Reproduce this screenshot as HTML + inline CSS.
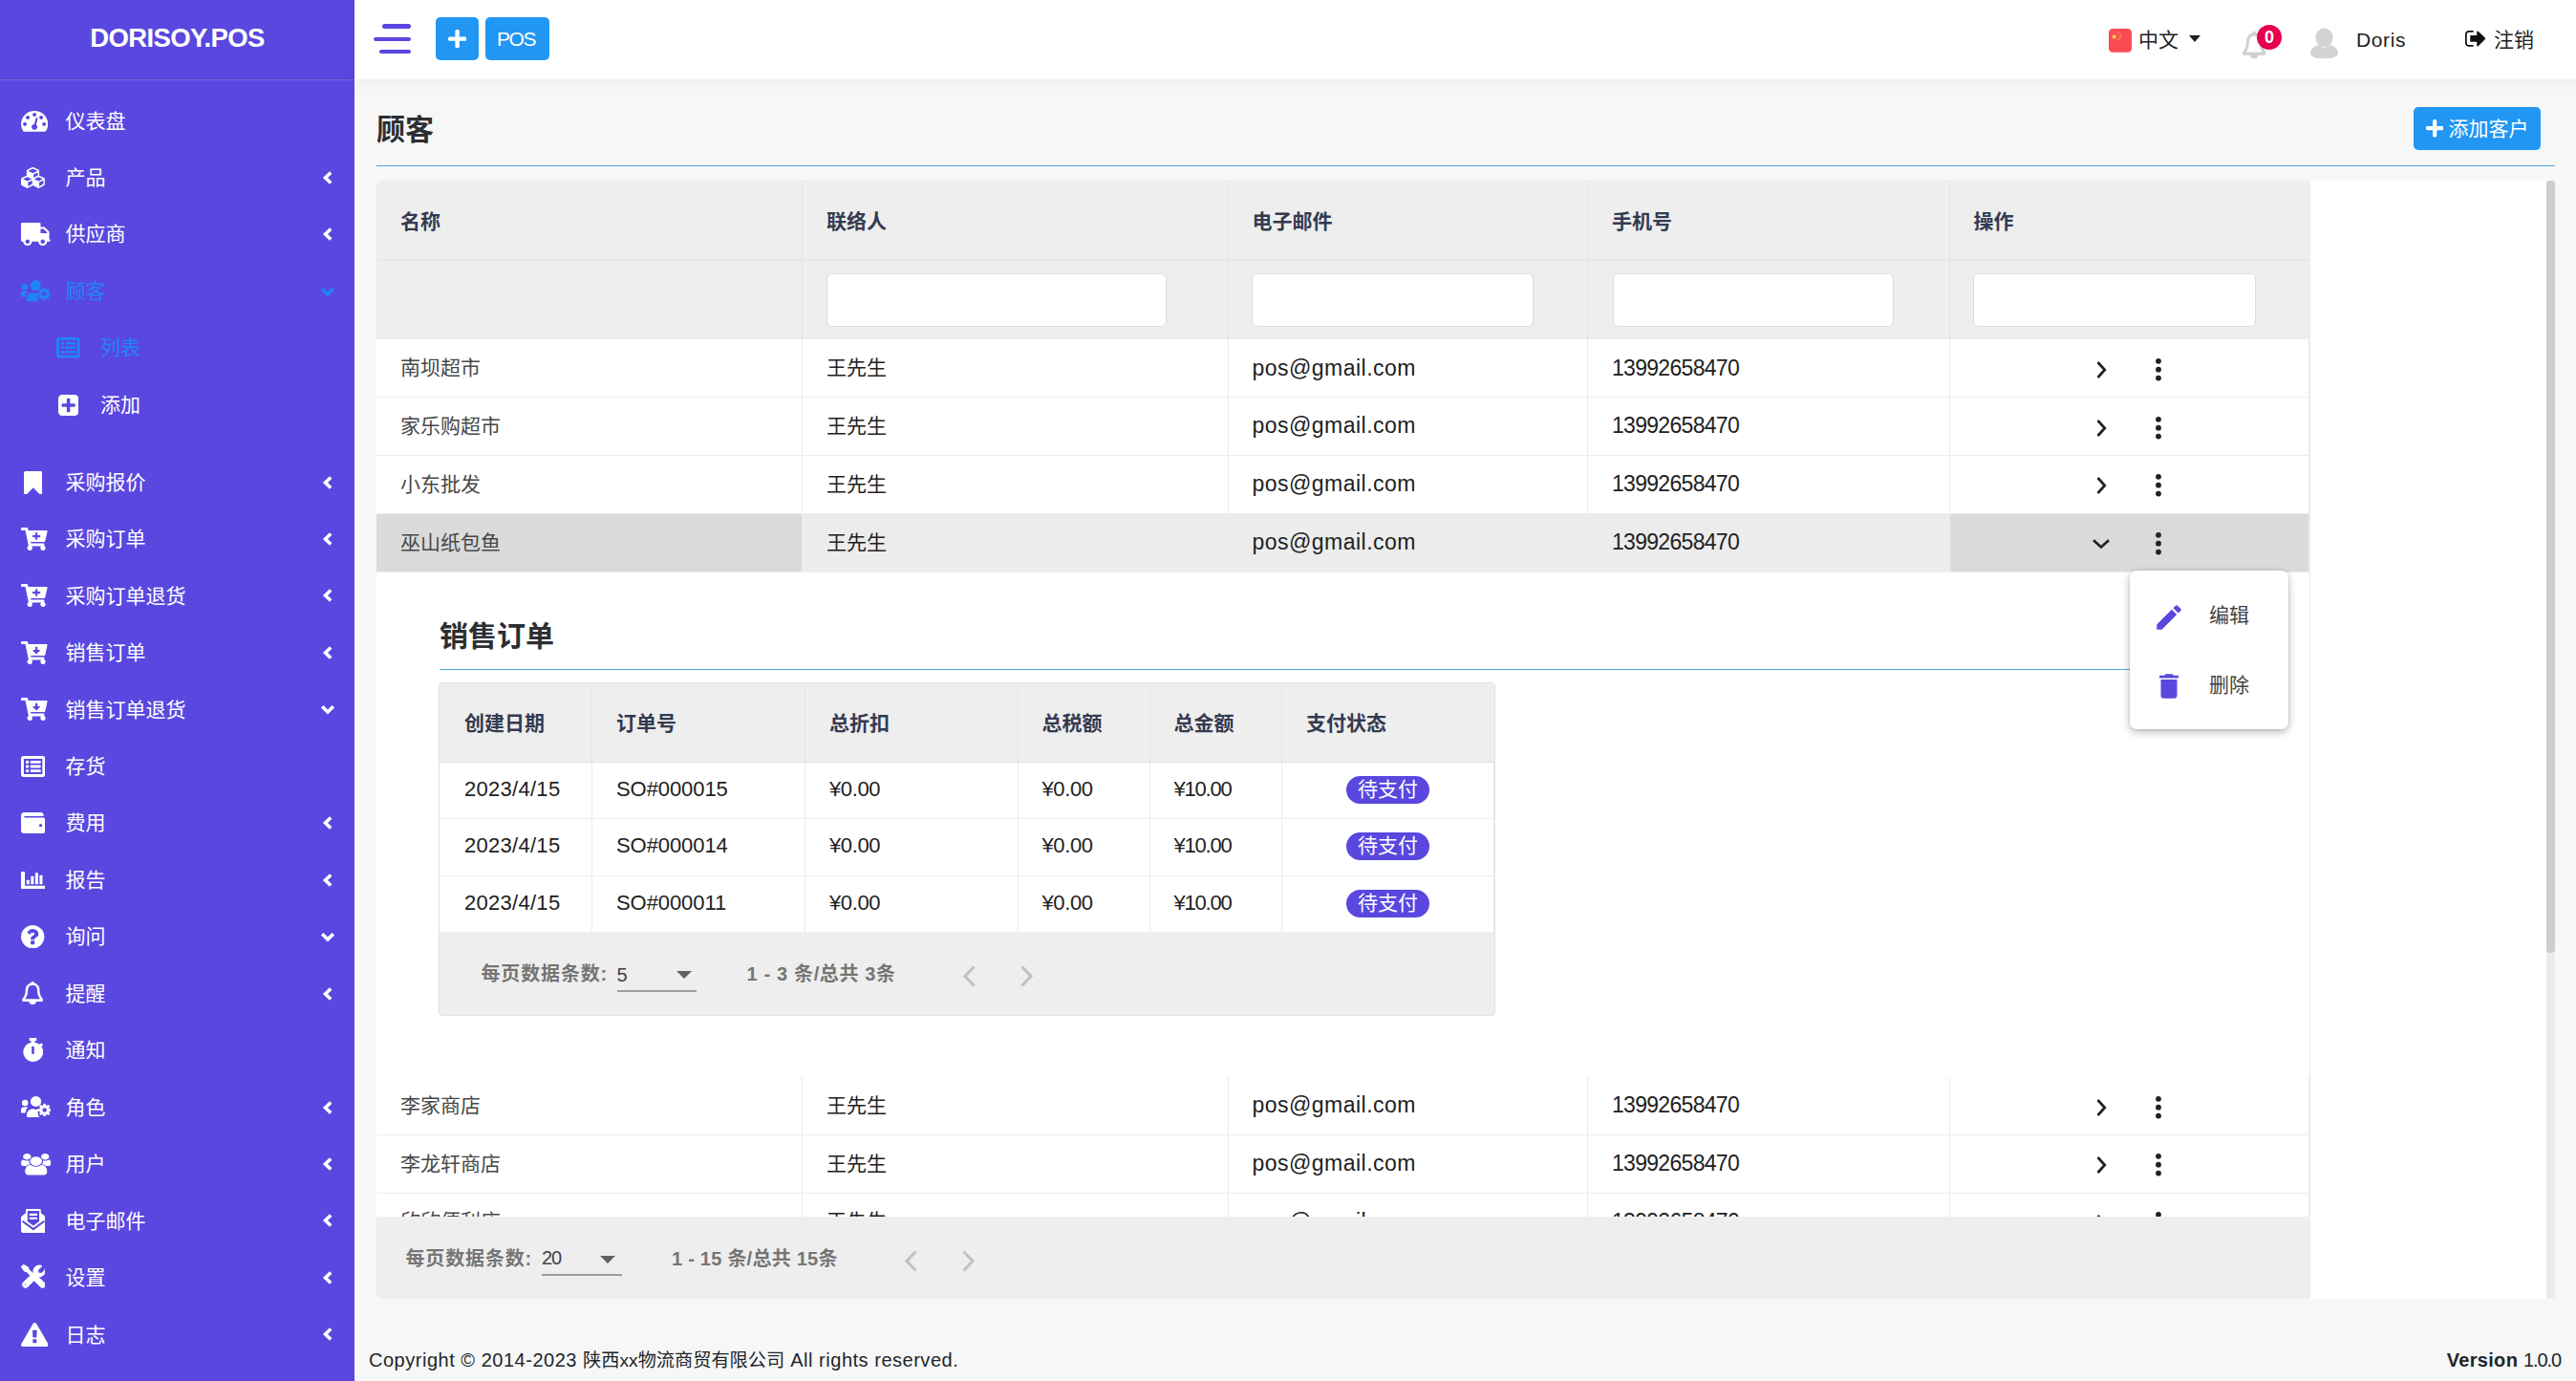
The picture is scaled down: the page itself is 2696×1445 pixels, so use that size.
<!DOCTYPE html>
<html lang="zh-CN"><head><meta charset="utf-8"><title>顾客 - DORISOY.POS</title>
<style>
:root{--bg:#5a47e0}
*{box-sizing:border-box}
html,body{margin:0;padding:0}
body{width:2696px;height:1445px;overflow:hidden;position:relative;background:#f7f7f7;
 font-family:"Liberation Sans","Noto Sans CJK SC",sans-serif;color:#212529;font-size:21px}
.abs{position:absolute}
svg.ic{display:block}
/* sidebar */
#side{position:absolute;left:0;top:0;width:371px;height:1445px;background:var(--bg);color:#fff}
#brand{position:absolute;left:0;top:0;width:371px;height:83.500px;border-bottom:1px solid rgba(255,255,255,.16);
 text-align:center;line-height:79.500px;font-weight:700;font-size:27.500px;letter-spacing:-.64px;box-shadow:inset 0 -1px 0 rgba(0,0,0,.14)}
.mi{position:absolute;left:0;width:371px;height:60px}
.mic{position:absolute;top:0;height:60px;display:flex;align-items:center}
.mt{position:absolute;top:.8px;height:60px;line-height:58px;font-size:21px;white-space:nowrap}
.chev{position:absolute;left:336px;top:0;height:60px;display:flex;align-items:center}
/* header */
#top{position:absolute;left:371px;top:0;width:2325px;height:82.700px;background:#fff;box-shadow:0 3px 14px rgba(0,0,0,.055)}
#burger{position:absolute;left:20px;top:25px;width:38.500px;height:34px}
#burger i{position:absolute;right:0;height:4.700px;border-radius:3px;background:#5a47e0}
.btnb{position:absolute;top:18px;height:45px;background:#2196f3;border-radius:5px;color:#fff;display:flex;align-items:center;justify-content:center}
/* content */
#title{position:absolute;left:394px;top:112.800px;font-size:30px;font-weight:700;line-height:46px;color:#2b2f33}
#addbtn{position:absolute;left:2526px;top:112px;width:133px;height:45px;background:#2196f3;border-radius:5px;color:#fff;
 font-size:21px;white-space:nowrap}
#addbtn span{position:absolute;left:36.600px;top:7.500px;line-height:30px}
.hr{position:absolute;height:1px;background:#48a3d6}
#card{position:absolute;left:394px;top:189px;width:2280px;height:1170px;background:#fff;overflow:hidden;border-radius:5px}
#tbl{position:absolute;left:0;top:0;width:2024px;height:1170px;border-right:1px solid #ececec}
.thead,.ithead{position:absolute;left:0;width:100%;background:#eeeeee;border-bottom:1px solid #e2e2e2}
.th{position:absolute;top:0;height:100%;border-right:1px solid #e4e4e4;display:flex;align-items:center;padding-left:25px;
 font-weight:700;color:#343a50;font-size:21px}
.th:last-child{border-right:none}
.finp{position:absolute;top:13px;height:56px;background:#fff;border:1px solid #dcdcdc;border-radius:6px}
.row{position:absolute;left:0;width:100%;border-bottom:1px solid #ededed}
.cell{position:absolute;top:0;height:100%;border-right:1px solid #ebebeb;display:flex;align-items:center;padding-left:25px;
 color:#212121;font-size:21px;white-space:nowrap}
.cell.c0{color:#474747}
.cell.lat{color:#212121}
.cell span{position:relative;top:-2px}
.cell.lat span{top:-1px}
.cell.lat.big span{top:0}
#itbl .th,#itbl .cell{padding-left:25px}
#itbl .th:first-child,#itbl .cell:first-child{padding-left:26px}
#itbl .th span{position:relative;top:-1px}
#exp{position:absolute;left:0;top:409.500px;width:2023px;height:528px;background:#fff}
#ititle{position:absolute;left:66px;top:44px;font-size:30px;font-weight:700;line-height:46px;color:#2b2f33}
#itbl{position:absolute;left:65px;top:115.500px;width:1106px;height:349px;background:#eee;border:1px solid #e2e2e2;border-radius:4px;overflow:hidden}
.badge{position:absolute;width:87px;height:29px;border-radius:15px;background:#5a47e0;color:#fff;font-size:21px;line-height:27px;text-align:center}
.pagbar{position:absolute;left:0;background:#eeeeee;color:#757575;font-weight:700;font-size:20px}
.plabel,.pinfo{position:absolute;line-height:32px;white-space:nowrap}
.plabel{letter-spacing:.85px}
.psel{position:absolute;height:32px;border-bottom:2px solid #9e9e9e;font-weight:400;color:#424242;font-size:20px;padding-left:0}
.pcaret{position:absolute;width:0;height:0;border-left:8px solid transparent;border-right:8px solid transparent;border-top:8px solid #616161}
#menu{position:absolute;left:2229px;top:597px;width:166px;height:166px;background:#fff;border-radius:7px;
 box-shadow:0 3px 8px rgba(0,0,0,.28),0 0 3px rgba(0,0,0,.12)}
#menu span{position:absolute;left:83px;font-size:21px;color:#424242;line-height:30px;margin-top:1.300px}
#vthumb{position:absolute;left:2665px;top:189px;width:9px;height:807.500px;background:#cdcdcd;border-radius:4px}
#vtrack{position:absolute;left:2665px;top:189px;width:9px;height:1170px;background:#ebebeb}
#foot{position:absolute;left:386px;top:1406px;font-size:20px;line-height:34px;color:#212529;white-space:nowrap;letter-spacing:.52px}
#foot i{font-style:normal;font-size:19.200px;letter-spacing:0}
#ver{position:absolute;right:16px;top:1406px;font-size:20px;line-height:34px;color:#212529;white-space:nowrap;letter-spacing:.3px}

</style></head>
<body>
<div id="side">
<div id="brand">DORISOY.POS</div>
<div class="mi" style="top:96.8px;color:#fff"><svg class="abs" viewBox="0 256 1792 1408" preserveAspectRatio="none" style="left:21.9px;top:19.4px;width:28.2px;height:21.8px" fill="currentColor"><path transform="translate(0,1536) scale(1,-1)" d="M384 384q0 53 -37.5 90.5t-90.5 37.5t-90.5 -37.5t-37.5 -90.5t37.5 -90.5t90.5 -37.5t90.5 37.5t37.5 90.5zM576 832q0 53 -37.5 90.5t-90.5 37.5t-90.5 -37.5t-37.5 -90.5t37.5 -90.5t90.5 -37.5t90.5 37.5t37.5 90.5zM1004 351l101 382q6 26 -7.5 48.5t-38.5 29.5 t-48 -6.5t-30 -39.5l-101 -382q-60 -5 -107 -43.5t-63 -98.5q-20 -77 20 -146t117 -89t146 20t89 117q16 60 -6 117t-72 91zM1664 384q0 53 -37.5 90.5t-90.5 37.5t-90.5 -37.5t-37.5 -90.5t37.5 -90.5t90.5 -37.5t90.5 37.5t37.5 90.5zM1024 1024q0 53 -37.5 90.5 t-90.5 37.5t-90.5 -37.5t-37.5 -90.5t37.5 -90.5t90.5 -37.5t90.5 37.5t37.5 90.5zM1472 832q0 53 -37.5 90.5t-90.5 37.5t-90.5 -37.5t-37.5 -90.5t37.5 -90.5t90.5 -37.5t90.5 37.5t37.5 90.5zM1792 384q0 -261 -141 -483q-19 -29 -54 -29h-1402q-35 0 -54 29 q-141 221 -141 483q0 182 71 348t191 286t286 191t348 71t348 -71t286 -191t191 -286t71 -348z"/></svg><span class="mt" style="left:68.5px">仪表盘</span></div>
<div class="mi" style="top:156.2px;color:#fff"><svg class="abs" viewBox="0 0 2176 1792" preserveAspectRatio="none" style="left:21.9px;top:18.8px;width:24.9px;height:21.9px" fill="currentColor"><path transform="translate(0,1536) scale(1,-1)" d="M640 -96l384 192v314l-384 -164v-342zM576 358l404 173l-404 173l-404 -173zM1664 -96l384 192v314l-384 -164v-342zM1600 358l404 173l-404 173l-404 -173zM1152 651l384 165v266l-384 -164v-267zM1088 1030l441 189l-441 189l-441 -189zM2176 512v-416q0 -36 -19 -67 t-52 -47l-448 -224q-25 -14 -57 -14t-57 14l-448 224q-4 2 -7 4q-2 -2 -7 -4l-448 -224q-25 -14 -57 -14t-57 14l-448 224q-33 16 -52 47t-19 67v416q0 38 21.5 70t56.5 48l434 186v400q0 38 21.5 70t56.5 48l448 192q23 10 50 10t50 -10l448 -192q35 -16 56.5 -48t21.5 -70 v-400l434 -186q36 -16 57 -48t21 -70z"/></svg><span class="mt" style="left:68.5px">产品</span><svg class="abs" style="left:335.4px;top:19.5px;width:16px;height:20px" viewBox="0 0 16 20" fill="none" stroke="#fff" stroke-width="3.600"><path d="M11.200 4.500 5.500 10l5.700 5.500"/></svg></div>
<div class="mi" style="top:215.7px;color:#fff"><svg class="abs" viewBox="64 256 1728 1408" preserveAspectRatio="none" style="left:21.9px;top:17.2px;width:30.7px;height:24.1px" fill="currentColor"><path transform="translate(1856,0) scale(-1,1) translate(0,1536) scale(1,-1)" d="M640 128q0 52 -38 90t-90 38t-90 -38t-38 -90t38 -90t90 -38t90 38t38 90zM256 640h384v256h-158q-13 0 -22 -9l-195 -195q-9 -9 -9 -22v-30zM1536 128q0 52 -38 90t-90 38t-90 -38t-38 -90t38 -90t90 -38t90 38t38 90zM1792 1216v-1024q0 -15 -4 -26.5t-13.5 -18.5 t-16.5 -11.5t-23.5 -6t-22.5 -2t-25.5 0t-22.5 0.5q0 -106 -75 -181t-181 -75t-181 75t-75 181h-384q0 -106 -75 -181t-181 -75t-181 75t-75 181h-64q-3 0 -22.5 -0.5t-25.5 0t-22.5 2t-23.5 6t-16.5 11.5t-13.5 18.5t-4 26.5q0 26 19 45t45 19v320q0 8 -0.5 35t0 38 t2.5 34.5t6.5 37t14 30.5t22.5 30l198 198q19 19 50.5 32t58.5 13h160v192q0 26 19 45t45 19h1024q26 0 45 -19t19 -45z"/></svg><span class="mt" style="left:68.5px">供应商</span><svg class="abs" style="left:335.4px;top:19.5px;width:16px;height:20px" viewBox="0 0 16 20" fill="none" stroke="#fff" stroke-width="3.600"><path d="M11.200 4.500 5.500 10l5.700 5.500"/></svg></div>
<div class="mi" style="top:275.2px;color:#1f85f5"><svg class="abs" viewBox="0 0 30.800 22.200" preserveAspectRatio="none" style="left:22.0px;top:18.3px;width:30.8px;height:22.2px" fill="currentColor" ><circle cx="4.100" cy="7.100" r="3.200"/><path d="M-.2 17.600v-2.700a3.600 3.600 0 0 1 3.600-3.600h1.400a3.600 3.600 0 0 1 2.300.8c-1.700 1.400-2.500 3.200-2.500 5.500z"/><circle cx="15.200" cy="5.500" r="5.500"/><path d="M5.900 22.200v-2.900a5.900 5.900 0 0 1 5.900-5.900h.8c1.700.8 3.500.8 5.200 0h.3a7.800 7.800 0 0 0-.9 3.800c0 2 .6 3.700 1.700 5z"/><g transform="translate(17.400000000000002,7.8999999999999995) scale(0.008723958333333334) translate(0,-128)"><path transform="translate(0,1536) scale(1,-1)" d="M1024 640q0 106 -75 181t-181 75t-181 -75t-75 -181t75 -181t181 -75t181 75t75 181zM1536 749v-222q0 -12 -8 -23t-20 -13l-185 -28q-19 -54 -39 -91q35 -50 107 -138q10 -12 10 -25t-9 -23q-27 -37 -99 -108t-94 -71q-12 0 -26 9l-138 108q-44 -23 -91 -38 q-16 -136 -29 -186q-7 -28 -36 -28h-222q-14 0 -24.5 8.5t-11.5 21.5l-28 184q-49 16 -90 37l-141 -107q-10 -9 -25 -9q-14 0 -25 11q-126 114 -165 168q-7 10 -7 23q0 12 8 23q15 21 51 66.5t54 70.5q-27 50 -41 99l-183 27q-13 2 -21 12.5t-8 23.5v222q0 12 8 23t19 13 l186 28q14 46 39 92q-40 57 -107 138q-10 12 -10 24q0 10 9 23q26 36 98.5 107.5t94.5 71.5q13 0 26 -10l138 -107q44 23 91 38q16 136 29 186q7 28 36 28h222q14 0 24.5 -8.5t11.5 -21.5l28 -184q49 -16 90 -37l142 107q9 9 24 9q13 0 25 -10q129 -119 165 -170q7 -8 7 -22 q0 -12 -8 -23q-15 -21 -51 -66.5t-54 -70.5q26 -50 41 -98l183 -28q13 -2 21 -12.5t8 -23.5z"/></g></svg><span class="mt" style="left:68.5px">顾客</span><svg class="abs" style="left:333.4px;top:21.5px;width:20px;height:16px" viewBox="0 0 20 16" fill="none" stroke="#1f85f5" stroke-width="3.600"><path d="M4.200 5.300 10 11l5.800-5.700"/></svg></div>
<div class="mi" style="top:334.6px;color:#1f85f5"><svg class="abs" viewBox="0 0 25 22" preserveAspectRatio="none" style="left:59.0px;top:18.6px;width:24.6px;height:21.5px" fill="currentColor" ><path fill-rule="evenodd" d="M2.800 0h19.400A2.800 2.800 0 0 1 25 2.800v16.400a2.800 2.800 0 0 1-2.800 2.800H2.800A2.800 2.800 0 0 1 0 19.200V2.800A2.800 2.800 0 0 1 2.800 0zm.5 2.900a.4.400 0 0 0-.4.400v15.400c0 .2.200.4.400.4h18.400c.2 0 .4-.2.400-.4V3.300a.4.400 0 0 0-.4-.4z"/><circle cx="6.500" cy="6.400" r="1.700"/><circle cx="6.500" cy="11" r="1.700"/><circle cx="6.500" cy="15.600" r="1.700"/><rect x="9.600" y="5" width="10.800" height="2.800" rx=".6"/><rect x="9.600" y="9.600" width="10.800" height="2.800" rx=".6"/><rect x="9.600" y="14.200" width="10.800" height="2.800" rx=".6"/></svg><span class="mt" style="left:105px">列表</span></div>
<div class="mi" style="top:394.1px;color:#fff"><svg class="abs" viewBox="0 128 1536 1536" preserveAspectRatio="none" style="left:61.0px;top:18.9px;width:21.2px;height:22.0px" fill="currentColor"><path transform="translate(0,1536) scale(1,-1)" d="M1280 576v128q0 26 -19 45t-45 19h-320v320q0 26 -19 45t-45 19h-128q-26 0 -45 -19t-19 -45v-320h-320q-26 0 -45 -19t-19 -45v-128q0 -26 19 -45t45 -19h320v-320q0 -26 19 -45t45 -19h128q26 0 45 19t19 45v320h320q26 0 45 19t19 45zM1536 1120v-960 q0 -119 -84.5 -203.5t-203.5 -84.5h-960q-119 0 -203.5 84.5t-84.5 203.5v960q0 119 84.5 203.5t203.5 84.5h960q119 0 203.5 -84.5t84.5 -203.5z"/></svg><span class="mt" style="left:105px">添加</span></div>
<div class="mi" style="top:475.0px;color:#fff"><svg class="abs" viewBox="0 128 1280 1512" preserveAspectRatio="none" style="left:24.6px;top:17.7px;width:19.6px;height:24.6px" fill="currentColor"><path transform="translate(0,1536) scale(1,-1)" d="M1164 1408q23 0 44 -9q33 -13 52.5 -41t19.5 -62v-1289q0 -34 -19.5 -62t-52.5 -41q-19 -8 -44 -8q-48 0 -83 32l-441 424l-441 -424q-36 -33 -83 -33q-23 0 -44 9q-33 13 -52.5 41t-19.5 62v1289q0 34 19.5 62t52.5 41q21 9 44 9h1048z"/></svg><span class="mt" style="left:68.5px">采购报价</span><svg class="abs" style="left:335.4px;top:19.5px;width:16px;height:20px" viewBox="0 0 16 20" fill="none" stroke="#fff" stroke-width="3.600"><path d="M11.200 4.500 5.500 10l5.700 5.500"/></svg></div>
<div class="mi" style="top:534.5px;color:#fff"><svg class="abs" viewBox="0 0 576 512" preserveAspectRatio="none" style="left:22.4px;top:17.5px;width:27.6px;height:24.0px" fill="currentColor" ><path fill-rule="evenodd" d="M504.717 320H211.572l6.545 32h268.418c15.401 0 26.816 14.301 23.403 29.319l-5.517 24.276C523.112 414.668 536 433.828 536 456c0 31.202-25.519 56.444-56.824 55.994-29.823-.429-54.350-24.631-55.155-54.447-.44-16.287 6.085-31.049 16.803-41.548H231.176C241.553 426.165 248 440.326 248 456c0 31.813-26.528 57.431-58.670 55.938-28.540-1.325-51.751-24.385-53.251-52.917-1.158-22.034 10.436-41.455 28.051-51.586L93.883 64H24C10.745 64 0 53.255 0 40V24C0 10.745 10.745 0 24 0h102.529c11.401 0 21.228 8.021 23.513 19.190L159.208 64H551.990c15.401 0 26.816 14.301 23.403 29.319l-47.273 208C525.637 312.246 515.923 320 504.717 320zM408 168h-48v-40c0-8.837-7.163-16-16-16h-16c-8.837 0-16 7.163-16 16v40h-48c-8.837 0-16 7.163-16 16v16c0 8.837 7.163 16 16 16h48v40c0 8.837 7.163 16 16 16h16c8.837 0 16-7.163 16-16v-40h48c8.837 0 16-7.163 16-16v-16c0-8.837-7.163-16-16-16z"/></svg><span class="mt" style="left:68.5px">采购订单</span><svg class="abs" style="left:335.4px;top:19.5px;width:16px;height:20px" viewBox="0 0 16 20" fill="none" stroke="#fff" stroke-width="3.600"><path d="M11.200 4.500 5.500 10l5.700 5.500"/></svg></div>
<div class="mi" style="top:593.9px;color:#fff"><svg class="abs" viewBox="0 0 576 512" preserveAspectRatio="none" style="left:22.4px;top:17.6px;width:27.6px;height:24.0px" fill="currentColor" ><path fill-rule="evenodd" d="M504.717 320H211.572l6.545 32h268.418c15.401 0 26.816 14.301 23.403 29.319l-5.517 24.276C523.112 414.668 536 433.828 536 456c0 31.202-25.519 56.444-56.824 55.994-29.823-.429-54.350-24.631-55.155-54.447-.44-16.287 6.085-31.049 16.803-41.548H231.176C241.553 426.165 248 440.326 248 456c0 31.813-26.528 57.431-58.670 55.938-28.540-1.325-51.751-24.385-53.251-52.917-1.158-22.034 10.436-41.455 28.051-51.586L93.883 64H24C10.745 64 0 53.255 0 40V24C0 10.745 10.745 0 24 0h102.529c11.401 0 21.228 8.021 23.513 19.190L159.208 64H551.990c15.401 0 26.816 14.301 23.403 29.319l-47.273 208C525.637 312.246 515.923 320 504.717 320zM408 168h-48v-40c0-8.837-7.163-16-16-16h-16c-8.837 0-16 7.163-16 16v40h-48c-8.837 0-16 7.163-16 16v16c0 8.837 7.163 16 16 16h48v40c0 8.837 7.163 16 16 16h16c8.837 0 16-7.163 16-16v-40h48c8.837 0 16-7.163 16-16v-16c0-8.837-7.163-16-16-16z"/></svg><span class="mt" style="left:68.5px">采购订单退货</span><svg class="abs" style="left:335.4px;top:19.5px;width:16px;height:20px" viewBox="0 0 16 20" fill="none" stroke="#fff" stroke-width="3.600"><path d="M11.200 4.500 5.500 10l5.700 5.500"/></svg></div>
<div class="mi" style="top:653.4px;color:#fff"><svg class="abs" viewBox="0 0 576 512" preserveAspectRatio="none" style="left:22.4px;top:17.6px;width:27.6px;height:24.0px" fill="currentColor" ><path fill-rule="evenodd" d="M504.717 320H211.572l6.545 32h268.418c15.401 0 26.816 14.301 23.403 29.319l-5.517 24.276C523.112 414.668 536 433.828 536 456c0 31.202-25.519 56.444-56.824 55.994-29.823-.429-54.350-24.631-55.155-54.447-.44-16.287 6.085-31.049 16.803-41.548H231.176C241.553 426.165 248 440.326 248 456c0 31.813-26.528 57.431-58.670 55.938-28.540-1.325-51.751-24.385-53.251-52.917-1.158-22.034 10.436-41.455 28.051-51.586L93.883 64H24C10.745 64 0 53.255 0 40V24C0 10.745 10.745 0 24 0h102.529c11.401 0 21.228 8.021 23.513 19.190L159.208 64H551.990c15.401 0 26.816 14.301 23.403 29.319l-47.273 208C525.637 312.246 515.923 320 504.717 320zM403.029 192H360v-60c0-6.627-5.373-12-12-12h-24c-6.627 0-12 5.373-12 12v60h-43.029c-10.691 0-16.045 12.926-8.485 20.485l67.029 67.029c4.686 4.686 12.284 4.686 16.971 0l67.029-67.029c7.559-7.559 2.205-20.485-8.486-20.485z"/></svg><span class="mt" style="left:68.5px">销售订单</span><svg class="abs" style="left:335.4px;top:19.5px;width:16px;height:20px" viewBox="0 0 16 20" fill="none" stroke="#fff" stroke-width="3.600"><path d="M11.200 4.500 5.500 10l5.700 5.500"/></svg></div>
<div class="mi" style="top:712.8px;color:#fff"><svg class="abs" viewBox="0 0 576 512" preserveAspectRatio="none" style="left:22.4px;top:17.7px;width:27.6px;height:24.0px" fill="currentColor" ><path fill-rule="evenodd" d="M504.717 320H211.572l6.545 32h268.418c15.401 0 26.816 14.301 23.403 29.319l-5.517 24.276C523.112 414.668 536 433.828 536 456c0 31.202-25.519 56.444-56.824 55.994-29.823-.429-54.350-24.631-55.155-54.447-.44-16.287 6.085-31.049 16.803-41.548H231.176C241.553 426.165 248 440.326 248 456c0 31.813-26.528 57.431-58.670 55.938-28.540-1.325-51.751-24.385-53.251-52.917-1.158-22.034 10.436-41.455 28.051-51.586L93.883 64H24C10.745 64 0 53.255 0 40V24C0 10.745 10.745 0 24 0h102.529c11.401 0 21.228 8.021 23.513 19.190L159.208 64H551.990c15.401 0 26.816 14.301 23.403 29.319l-47.273 208C525.637 312.246 515.923 320 504.717 320zM403.029 192H360v-60c0-6.627-5.373-12-12-12h-24c-6.627 0-12 5.373-12 12v60h-43.029c-10.691 0-16.045 12.926-8.485 20.485l67.029 67.029c4.686 4.686 12.284 4.686 16.971 0l67.029-67.029c7.559-7.559 2.205-20.485-8.486-20.485z"/></svg><span class="mt" style="left:68.5px">销售订单退货</span><svg class="abs" style="left:333.4px;top:21.5px;width:20px;height:16px" viewBox="0 0 20 16" fill="none" stroke="#fff" stroke-width="3.600"><path d="M4.200 5.300 10 11l5.800-5.700"/></svg></div>
<div class="mi" style="top:772.2px;color:#fff"><svg class="abs" viewBox="0 0 25 22" preserveAspectRatio="none" style="left:21.7px;top:18.8px;width:25.3px;height:22.0px" fill="currentColor" ><path fill-rule="evenodd" d="M2.800 0h19.400A2.800 2.800 0 0 1 25 2.800v16.400a2.800 2.800 0 0 1-2.800 2.800H2.800A2.800 2.800 0 0 1 0 19.200V2.800A2.800 2.800 0 0 1 2.800 0zm.5 2.900a.4.400 0 0 0-.4.400v15.400c0 .2.200.4.400.4h18.400c.2 0 .4-.2.400-.4V3.300a.4.400 0 0 0-.4-.4z"/><circle cx="6.500" cy="6.400" r="1.700"/><circle cx="6.500" cy="11" r="1.700"/><circle cx="6.500" cy="15.600" r="1.700"/><rect x="9.600" y="5" width="10.800" height="2.800" rx=".6"/><rect x="9.600" y="9.600" width="10.800" height="2.800" rx=".6"/><rect x="9.600" y="14.200" width="10.800" height="2.800" rx=".6"/></svg><span class="mt" style="left:68.5px">存货</span></div>
<div class="mi" style="top:831.7px;color:#fff"><svg class="abs" viewBox="0 0 25 22" preserveAspectRatio="none" style="left:21.7px;top:18.3px;width:25.3px;height:22.0px" fill="currentColor" ><path d="M22.500 5.500H3.900a.8.800 0 0 1 0-1.600h18.800c.4 0 .8-.3.800-.8C23.500 1.400 22.100 0 20.400 0H3.100C1.400 0 0 1.400 0 3.100v15.800C0 20.600 1.400 22 3.100 22h19.400c1.400 0 2.500-1.100 2.500-2.400V7.900c0-1.300-1.100-2.400-2.500-2.400zM20.300 15.300a1.600 1.600 0 1 1 0-3.200 1.600 1.600 0 0 1 0 3.200z"/></svg><span class="mt" style="left:68.5px">费用</span><svg class="abs" style="left:335.4px;top:19.5px;width:16px;height:20px" viewBox="0 0 16 20" fill="none" stroke="#fff" stroke-width="3.600"><path d="M11.200 4.500 5.500 10l5.700 5.500"/></svg></div>
<div class="mi" style="top:891.2px;color:#fff"><svg class="abs" viewBox="0 0 25 18.500" preserveAspectRatio="none" style="left:21.7px;top:20.8px;width:25.3px;height:18.5px" fill="currentColor" ><path d="M1 0h2.200a.8.800 0 0 1 .8.800V14.700h20.200a.8.800 0 0 1 .8.800v2.200a.8.800 0 0 1-.8.800H.8a.8.800 0 0 1-.8-.8V.8A.8.800 0 0 1 1 0z"/><rect x="5.700" y="8.800" width="3" height="4.400" rx=".5"/><rect x="10.200" y="4.800" width="3" height="8.400" rx=".5"/><rect x="14.700" y="1.200" width="3" height="12" rx=".5"/><rect x="19.200" y="3.800" width="3" height="9.400" rx=".5"/></svg><span class="mt" style="left:68.5px">报告</span><svg class="abs" style="left:335.4px;top:19.5px;width:16px;height:20px" viewBox="0 0 16 20" fill="none" stroke="#fff" stroke-width="3.600"><path d="M11.200 4.500 5.500 10l5.700 5.500"/></svg></div>
<div class="mi" style="top:950.6px;color:#fff"><svg class="abs" viewBox="0 128 1536 1536" preserveAspectRatio="none" style="left:22.2px;top:17.4px;width:24.4px;height:24.3px" fill="currentColor"><path transform="translate(0,1536) scale(1,-1)" d="M896 160v192q0 14 -9 23t-23 9h-192q-14 0 -23 -9t-9 -23v-192q0 -14 9 -23t23 -9h192q14 0 23 9t9 23zM1152 832q0 88 -55.5 163t-138.5 116t-170 41q-243 0 -371 -213q-15 -24 8 -42l132 -100q7 -6 19 -6q16 0 25 12q53 68 86 92q34 24 86 24q48 0 85.5 -26t37.5 -59 q0 -38 -20 -61t-68 -45q-63 -28 -115.5 -86.5t-52.5 -125.5v-36q0 -14 9 -23t23 -9h192q14 0 23 9t9 23q0 19 21.5 49.5t54.5 49.5q32 18 49 28.5t46 35t44.5 48t28 60.5t12.5 81zM1536 640q0 -209 -103 -385.5t-279.5 -279.5t-385.5 -103t-385.5 103t-279.5 279.5 t-103 385.5t103 385.5t279.5 279.5t385.5 103t385.5 -103t279.5 -279.5t103 -385.5z"/></svg><span class="mt" style="left:68.5px">询问</span><svg class="abs" style="left:333.4px;top:21.5px;width:20px;height:16px" viewBox="0 0 20 16" fill="none" stroke="#fff" stroke-width="3.600"><path d="M4.200 5.300 10 11l5.800-5.700"/></svg></div>
<div class="mi" style="top:1010.1px;color:#fff"><svg class="abs" viewBox="64 0 1664 1792" preserveAspectRatio="none" style="left:23.3px;top:16.9px;width:22.2px;height:24.0px" fill="currentColor" stroke="currentColor" stroke-width="70" stroke-linejoin="round"><path transform="translate(0,1536) scale(1,-1)" d="M912 -160q0 16 -16 16q-59 0 -101.5 42.5t-42.5 101.5q0 16 -16 16t-16 -16q0 -73 51.5 -124.5t124.5 -51.5q16 0 16 16zM246 128h1300q-266 300 -266 832q0 51 -24 105t-69 103t-121.5 80.5t-169.5 31.5t-169.5 -31.5t-121.5 -80.5t-69 -103t-24 -105q0 -532 -266 -832z M1728 128q0 -52 -38 -90t-90 -38h-448q0 -106 -75 -181t-181 -75t-181 75t-75 181h-448q-52 0 -90 38t-38 90q50 42 91 88t85 119.5t74.5 158.5t50 206t19.5 260q0 152 117 282.5t307 158.5q-8 19 -8 39q0 40 28 68t68 28t68 -28t28 -68q0 -20 -8 -39q190 -28 307 -158.5 t117 -282.5q0 -139 19.5 -260t50 -206t74.5 -158.5t85 -119.5t91 -88z"/></svg><span class="mt" style="left:68.5px">提醒</span><svg class="abs" style="left:335.4px;top:19.5px;width:16px;height:20px" viewBox="0 0 16 20" fill="none" stroke="#fff" stroke-width="3.600"><path d="M11.200 4.500 5.500 10l5.700 5.500"/></svg></div>
<div class="mi" style="top:1069.5px;color:#fff"><svg class="abs" viewBox="0.500 0 21.500 25.600" preserveAspectRatio="none" style="left:23.7px;top:16.5px;width:21.5px;height:25.0px" fill="currentColor" ><path d="M8 0h6a.8.800 0 0 1 .8.800v1.600a.8.800 0 0 1-.8.800h-1.200v1.700a10.300 10.300 0 0 1 5 2.100l1.200-1.200a.8.800 0 0 1 1.100 0l1.100 1.100a.8.800 0 0 1 0 1.100l-1.300 1.300A10.400 10.400 0 1 1 9.200 4.900V3.200H8a.8.800 0 0 1-.8-.8V.8A.8.800 0 0 1 8 0z"/><rect x="9.700" y="9" width="2.600" height="8.500" rx="1" fill="var(--bg)"/></svg><span class="mt" style="left:68.5px">通知</span></div>
<div class="mi" style="top:1129.0px;color:#fff"><svg class="abs" viewBox="0 0 30.800 22.200" preserveAspectRatio="none" style="left:21.5px;top:18.0px;width:31.5px;height:22.0px" fill="currentColor" ><circle cx="4.100" cy="7.100" r="3.200"/><path d="M-.2 17.600v-2.700a3.600 3.600 0 0 1 3.600-3.600h1.400a3.600 3.600 0 0 1 2.300.8c-1.700 1.400-2.500 3.200-2.500 5.500z"/><circle cx="15.200" cy="5.500" r="5.500"/><path d="M5.900 22.200v-2.900a5.900 5.900 0 0 1 5.900-5.900h.8c1.700.8 3.500.8 5.200 0h.3a7.800 7.800 0 0 0-.9 3.800c0 2 .6 3.700 1.700 5z"/><g transform="translate(17.400000000000002,7.8999999999999995) scale(0.008723958333333334) translate(0,-128)"><path transform="translate(0,1536) scale(1,-1)" d="M1024 640q0 106 -75 181t-181 75t-181 -75t-75 -181t75 -181t181 -75t181 75t75 181zM1536 749v-222q0 -12 -8 -23t-20 -13l-185 -28q-19 -54 -39 -91q35 -50 107 -138q10 -12 10 -25t-9 -23q-27 -37 -99 -108t-94 -71q-12 0 -26 9l-138 108q-44 -23 -91 -38 q-16 -136 -29 -186q-7 -28 -36 -28h-222q-14 0 -24.5 8.5t-11.5 21.5l-28 184q-49 16 -90 37l-141 -107q-10 -9 -25 -9q-14 0 -25 11q-126 114 -165 168q-7 10 -7 23q0 12 8 23q15 21 51 66.5t54 70.5q-27 50 -41 99l-183 27q-13 2 -21 12.5t-8 23.5v222q0 12 8 23t19 13 l186 28q14 46 39 92q-40 57 -107 138q-10 12 -10 24q0 10 9 23q26 36 98.5 107.5t94.5 71.5q13 0 26 -10l138 -107q44 23 91 38q16 136 29 186q7 28 36 28h222q14 0 24.5 -8.5t11.5 -21.5l28 -184q49 -16 90 -37l142 107q9 9 24 9q13 0 25 -10q129 -119 165 -170q7 -8 7 -22 q0 -12 -8 -23q-15 -21 -51 -66.5t-54 -70.5q26 -50 41 -98l183 -28q13 -2 21 -12.5t8 -23.5z"/></g></svg><span class="mt" style="left:68.5px">角色</span><svg class="abs" style="left:335.4px;top:19.5px;width:16px;height:20px" viewBox="0 0 16 20" fill="none" stroke="#fff" stroke-width="3.600"><path d="M11.200 4.500 5.500 10l5.700 5.500"/></svg></div>
<div class="mi" style="top:1188.4px;color:#fff"><svg class="abs" viewBox="0 0 1920 1792" preserveAspectRatio="none" style="left:21.5px;top:18.6px;width:31.5px;height:22.6px" fill="currentColor"><path transform="translate(0,1536) scale(1,-1)" d="M593 640q-162 -5 -265 -128h-134q-82 0 -138 40.5t-56 118.5q0 353 124 353q6 0 43.5 -21t97.5 -42.5t119 -21.5q67 0 133 23q-5 -37 -5 -66q0 -139 81 -256zM1664 3q0 -120 -73 -189.5t-194 -69.5h-874q-121 0 -194 69.5t-73 189.5q0 53 3.5 103.5t14 109t26.5 108.5 t43 97.5t62 81t85.5 53.5t111.5 20q10 0 43 -21.5t73 -48t107 -48t135 -21.5t135 21.5t107 48t73 48t43 21.5q61 0 111.5 -20t85.5 -53.5t62 -81t43 -97.5t26.5 -108.5t14 -109t3.5 -103.5zM640 1280q0 -106 -75 -181t-181 -75t-181 75t-75 181t75 181t181 75t181 -75 t75 -181zM1344 896q0 -159 -112.5 -271.5t-271.5 -112.5t-271.5 112.5t-112.5 271.5t112.5 271.5t271.5 112.5t271.5 -112.5t112.5 -271.5zM1920 671q0 -78 -56 -118.5t-138 -40.5h-134q-103 123 -265 128q81 117 81 256q0 29 -5 66q66 -23 133 -23q59 0 119 21.5t97.5 42.5 t43.5 21q124 0 124 -353zM1792 1280q0 -106 -75 -181t-181 -75t-181 75t-75 181t75 181t181 75t181 -75t75 -181z"/></svg><span class="mt" style="left:68.5px">用户</span><svg class="abs" style="left:335.4px;top:19.5px;width:16px;height:20px" viewBox="0 0 16 20" fill="none" stroke="#fff" stroke-width="3.600"><path d="M11.200 4.500 5.500 10l5.700 5.500"/></svg></div>
<div class="mi" style="top:1247.8px;color:#fff"><svg class="abs" viewBox="0 1 26 24" preserveAspectRatio="none" style="left:21.5px;top:16.9px;width:25.8px;height:25.1px" fill="currentColor" ><path d="M5 2.500A1.500 1.500 0 0 1 6.500 1h13A1.500 1.500 0 0 1 21 2.500V5l3.600 2.800c.9.700 1.400 1.700 1.400 2.800v12A2.400 2.400 0 0 1 23.600 25H2.400A2.400 2.400 0 0 1 0 22.600v-12c0-1.100.5-2.100 1.400-2.800L5 5z"/><path d="M6.800 3h12.400v10.500L13 17.800 6.800 13.500z" fill="var(--bg)"/><rect x="8.800" y="5.600" width="8.400" height="2" rx=".5"/><rect x="8.800" y="9.400" width="8.400" height="2" rx=".5"/><path d="M1.500 13.200 13 21.300l11.500-8.100" fill="none" stroke="var(--bg)" stroke-width="2"/></svg><span class="mt" style="left:68.5px">电子邮件</span><svg class="abs" style="left:335.4px;top:19.5px;width:16px;height:20px" viewBox="0 0 16 20" fill="none" stroke="#fff" stroke-width="3.600"><path d="M11.200 4.500 5.500 10l5.700 5.500"/></svg></div>
<div class="mi" style="top:1307.3px;color:#fff"><svg class="abs" viewBox="-.5 -.5 27 26.800" preserveAspectRatio="none" style="left:21.5px;top:16.2px;width:25.8px;height:25.1px" fill="currentColor" stroke="currentColor" stroke-width="1.100" stroke-linejoin="round"><path d="M0 2.300 2.300 0l5 2.900.6 2.400 5.900 5.900-2.200 2.200L5.700 7.500l-2.400-.6z"/><path d="M14.200 16.200l2.600-2.600a1 1 0 0 1 1.400 0l6.900 6.900a2.800 2.800 0 0 1-4 4l-6.900-6.900a1 1 0 0 1 0-1.400z"/><path d="M25.500 5.200c.5 2.200-.1 4.600-1.800 6.200a6.600 6.600 0 0 1-5.900 1.800L6.500 24.500a3.200 3.200 0 0 1-4.500-4.500L13.300 8.700a6.600 6.600 0 0 1 8.100-7.900c.5.100.6.700.3 1l-3.800 3.800.6 3.500 3.500.6 3.800-3.800c.300-.3.900-.2 1 .3zM4.200 23.200a1.200 1.200 0 1 0 0-2.400 1.200 1.200 0 0 0 0 2.400z" fill-rule="evenodd"/></svg><span class="mt" style="left:68.5px">设置</span><svg class="abs" style="left:335.4px;top:19.5px;width:16px;height:20px" viewBox="0 0 16 20" fill="none" stroke="#fff" stroke-width="3.600"><path d="M11.200 4.500 5.500 10l5.700 5.500"/></svg></div>
<div class="mi" style="top:1366.8px;color:#fff"><svg class="abs" viewBox="0 0 1792 1664" preserveAspectRatio="none" style="left:21.5px;top:17.0px;width:28.7px;height:25.1px" fill="currentColor"><path transform="translate(0,1536) scale(1,-1)" d="M1024 161v190q0 14 -9.5 23.5t-22.5 9.5h-192q-13 0 -22.5 -9.5t-9.5 -23.5v-190q0 -14 9.5 -23.5t22.5 -9.5h192q13 0 22.5 9.5t9.5 23.5zM1022 535l18 459q0 12 -10 19q-13 11 -24 11h-220q-11 0 -24 -11q-10 -7 -10 -21l17 -457q0 -10 10 -16.5t24 -6.5h185 q14 0 23.5 6.5t10.5 16.5zM1008 1469l768 -1408q35 -63 -2 -126q-17 -29 -46.5 -46t-63.5 -17h-1536q-34 0 -63.5 17t-46.5 46q-37 63 -2 126l768 1408q17 31 47 49t65 18t65 -18t47 -49z"/></svg><span class="mt" style="left:68.5px">日志</span><svg class="abs" style="left:335.4px;top:19.5px;width:16px;height:20px" viewBox="0 0 16 20" fill="none" stroke="#fff" stroke-width="3.600"><path d="M11.200 4.500 5.500 10l5.700 5.500"/></svg></div>
</div>
<div id="top">
 <div id="burger"><i style="top:0;width:29.500px"></i><i style="top:13.500px;width:38.500px"></i><i style="top:26.600px;width:32.500px"></i></div>
 <div class="btnb" style="left:85.400px;width:44.500px"></div><svg class="abs" style="left:97.8px;top:30.7px;width:19.2px;height:19.2px" viewBox="0 0 20 20" fill="#fff"><rect x="0" y="7.7" width="20" height="4.6" rx="1.600"/><rect x="7.7" y="0" width="4.6" height="20" rx="1.600"/></svg>
 <div class="btnb" style="left:137px;width:67.100px;font-size:21px;letter-spacing:-1.500px;padding-right:3px">POS</div>
 <svg class="abs" style="left:1836.200px;top:30.200px;width:24px;height:24.800px" viewBox="0 0 25 26" preserveAspectRatio="none"><rect width="25" height="26" rx="4.500" fill="#fa4b55"/><path fill="#ffd54a" d="M6 5.500l.9 2.100 2.300.2-1.700 1.500.5 2.200L6 10.300l-2 1.200.5-2.200L2.800 7.800l2.300-.2z"/><circle cx="10.500" cy="4.500" r=".8" fill="#ffd54a"/><circle cx="12.500" cy="6.500" r=".8" fill="#ffd54a"/><circle cx="12.500" cy="9.500" r=".8" fill="#ffd54a"/><circle cx="10.500" cy="11.500" r=".8" fill="#ffd54a"/></svg>
 <span class="abs" style="left:1867px;top:26px;font-size:21px;line-height:32px;color:#212121">中文</span>
 <span class="abs" style="left:1920px;top:37px;width:0;height:0;border-left:6px solid transparent;border-right:6px solid transparent;border-top:7px solid #212121"></span>
 <svg class="abs" viewBox="64 0 1664 1792" preserveAspectRatio="none" style="left:1975.5px;top:33.0px;width:24.5px;height:28.2px" fill="#cfcfcf" stroke="#cfcfcf" stroke-width="70" stroke-linejoin="round"><path transform="translate(0,1536) scale(1,-1)" d="M912 -160q0 16 -16 16q-59 0 -101.5 42.5t-42.5 101.5q0 16 -16 16t-16 -16q0 -73 51.5 -124.5t124.5 -51.5q16 0 16 16zM246 128h1300q-266 300 -266 832q0 51 -24 105t-69 103t-121.5 80.5t-169.5 31.5t-169.5 -31.5t-121.5 -80.5t-69 -103t-24 -105q0 -532 -266 -832z M1728 128q0 -52 -38 -90t-90 -38h-448q0 -106 -75 -181t-181 -75t-181 75t-75 181h-448q-52 0 -90 38t-38 90q50 42 91 88t85 119.5t74.5 158.5t50 206t19.5 260q0 152 117 282.5t307 158.5q-8 19 -8 39q0 40 28 68t68 28t68 -28t28 -68q0 -20 -8 -39q190 -28 307 -158.5 t117 -282.5q0 -139 19.5 -260t50 -206t74.5 -158.5t85 -119.5t91 -88z"/></svg>
 <span class="abs" style="left:1991.300px;top:26px;width:25.600px;height:26px;border-radius:13px;background:#e5024e;color:#fff;font-weight:700;font-size:18px;line-height:26px;text-align:center">0</span>
 <svg class="abs" style="left:2047px;top:28.600px;width:29px;height:32.200px" viewBox="0 0 30 34" preserveAspectRatio="none" fill="#d3d3d3"><ellipse cx="15" cy="11" rx="9.500" ry="10.500"/><path d="M0 28c0-5 5-8 9-9 2 2 4 3 6 3s4-1 6-3c4 1 9 4 9 9 0 2-2 4-5 5-3 1-7 1-10 1s-7 0-10-1c-3-1-5-3-5-5z"/></svg>
 <span class="abs" style="left:2095px;top:26px;font-size:21px;line-height:32px;color:#212121;letter-spacing:.6px">Doris</span>
 <svg class="abs" viewBox="0 256 1568 1280" preserveAspectRatio="none" style="left:2209.0px;top:32.2px;width:21.4px;height:16.8px" fill="#111"><path transform="translate(0,1536) scale(1,-1)" d="M640 96q0 -4 1 -20t0.5 -26.5t-3 -23.5t-10 -19.5t-20.5 -6.5h-320q-119 0 -203.5 84.5t-84.5 203.5v704q0 119 84.5 203.5t203.5 84.5h320q13 0 22.5 -9.5t9.5 -22.5q0 -4 1 -20t0.5 -26.5t-3 -23.5t-10 -19.5t-20.5 -6.5h-320q-66 0 -113 -47t-47 -113v-704 q0 -66 47 -113t113 -47h288h11h13t11.5 -1t11.5 -3t8 -5.5t7 -9t2 -13.5zM1568 640q0 -26 -19 -45l-544 -544q-19 -19 -45 -19t-45 19t-19 45v288h-448q-26 0 -45 19t-19 45v384q0 26 19 45t45 19h448v288q0 26 19 45t45 19t45 -19l544 -544q19 -19 19 -45z"/></svg>
 <span class="abs" style="left:2239px;top:26px;font-size:21px;line-height:32px;color:#212121">注销</span>
</div>
<div id="title">顾客</div>
<div id="addbtn"><svg class="abs" style="left:12.5px;top:13.2px;width:18.4px;height:18.4px" viewBox="0 0 20 20" fill="#fff"><rect x="0" y="7.7" width="20" height="4.6" rx="1.600"/><rect x="7.7" y="0" width="4.6" height="20" rx="1.600"/></svg><span>添加客户</span></div>
<div class="hr" style="left:394px;top:173px;width:2280px"></div>
<div id="card">
 <div id="tbl">
<div class="thead" style="top:0;height:83.5px">
<div class="th" style="left:0px;width:446px"><span>名称</span></div>
<div class="th" style="left:446px;width:445.5px"><span>联络人</span></div>
<div class="th" style="left:891.5px;width:376.5px"><span>电子邮件</span></div>
<div class="th" style="left:1268px;width:378.5px"><span>手机号</span></div>
<div class="th" style="left:1646.5px;width:376.5px"><span>操作</span></div>
</div>
<div class="thead" style="top:83.5px;height:82px;border-bottom:none">
<div class="th" style="left:0px;width:446px"></div>
<div class="th" style="left:446px;width:445.5px"><div class="finp" style="left:25px;width:355.5px"></div></div>
<div class="th" style="left:891.5px;width:376.5px"><div class="finp" style="left:24.5px;width:295px"></div></div>
<div class="th" style="left:1268px;width:378.5px"><div class="finp" style="left:26px;width:294px"></div></div>
<div class="th" style="left:1646.5px;width:376.5px"><div class="finp" style="left:24.5px;width:296px"></div></div>
</div>
<div class="row" style="top:166.2px;height:60.8px;background:#fff">
<div class="cell c0" style="left:0px;width:446px;"><span>南坝超市</span></div>
<div class="cell" style="left:446px;width:445.5px;"><span>王先生</span></div>
<div class="cell lat big" style="left:891.5px;width:376.5px;font-size:23px;letter-spacing:.48px;"><span>pos@gmail.com</span></div>
<div class="cell lat big" style="left:1268px;width:378.5px;font-size:23px;letter-spacing:-.7px;"><span>13992658470</span></div>
<div class="cell" style="left:1646.5px;width:376.5px;"><span></span></div>
<svg class="abs" style="left:1793px;top:19.599999999999998px;width:24px;height:24px" viewBox="0 0 24 24" fill="none" stroke="#212121" stroke-width="2.700"><path d="M8.500 4l7.300 8-7.300 8"/></svg>
<svg class="abs" style="left:1852.5px;top:17.599999999999998px;width:24px;height:28px" viewBox="0 0 24 28" fill="#212121"><circle cx="12" cy="4.800" r="2.900"/><circle cx="12" cy="13.700" r="2.900"/><circle cx="12" cy="22.600" r="2.900"/></svg>
</div>
<div class="row" style="top:227px;height:60.8px;background:#fff">
<div class="cell c0" style="left:0px;width:446px;"><span>家乐购超市</span></div>
<div class="cell" style="left:446px;width:445.5px;"><span>王先生</span></div>
<div class="cell lat big" style="left:891.5px;width:376.5px;font-size:23px;letter-spacing:.48px;"><span>pos@gmail.com</span></div>
<div class="cell lat big" style="left:1268px;width:378.5px;font-size:23px;letter-spacing:-.7px;"><span>13992658470</span></div>
<div class="cell" style="left:1646.5px;width:376.5px;"><span></span></div>
<svg class="abs" style="left:1793px;top:19.599999999999998px;width:24px;height:24px" viewBox="0 0 24 24" fill="none" stroke="#212121" stroke-width="2.700"><path d="M8.500 4l7.300 8-7.300 8"/></svg>
<svg class="abs" style="left:1852.5px;top:17.599999999999998px;width:24px;height:28px" viewBox="0 0 24 28" fill="#212121"><circle cx="12" cy="4.800" r="2.900"/><circle cx="12" cy="13.700" r="2.900"/><circle cx="12" cy="22.600" r="2.900"/></svg>
</div>
<div class="row" style="top:287.8px;height:60.8px;background:#fff">
<div class="cell c0" style="left:0px;width:446px;"><span>小东批发</span></div>
<div class="cell" style="left:446px;width:445.5px;"><span>王先生</span></div>
<div class="cell lat big" style="left:891.5px;width:376.5px;font-size:23px;letter-spacing:.48px;"><span>pos@gmail.com</span></div>
<div class="cell lat big" style="left:1268px;width:378.5px;font-size:23px;letter-spacing:-.7px;"><span>13992658470</span></div>
<div class="cell" style="left:1646.5px;width:376.5px;"><span></span></div>
<svg class="abs" style="left:1793px;top:19.599999999999998px;width:24px;height:24px" viewBox="0 0 24 24" fill="none" stroke="#212121" stroke-width="2.700"><path d="M8.500 4l7.300 8-7.300 8"/></svg>
<svg class="abs" style="left:1852.5px;top:17.599999999999998px;width:24px;height:28px" viewBox="0 0 24 28" fill="#212121"><circle cx="12" cy="4.800" r="2.900"/><circle cx="12" cy="13.700" r="2.900"/><circle cx="12" cy="22.600" r="2.900"/></svg>
</div>
<div class="row" style="top:348.6px;height:61.1px;background:#ececec">
<div class="cell c0" style="left:0px;width:446px;background:#dadada;"><span>巫山纸包鱼</span></div>
<div class="cell" style="left:446px;width:445.5px;"><span>王先生</span></div>
<div class="cell lat big" style="left:891.5px;width:376.5px;font-size:23px;letter-spacing:.48px;"><span>pos@gmail.com</span></div>
<div class="cell lat big" style="left:1268px;width:378.5px;font-size:23px;letter-spacing:-.7px;"><span>13992658470</span></div>
<div class="cell" style="left:1646.5px;width:376.5px;background:#dadada;"><span></span></div>
<svg class="abs" style="left:1793px;top:19.75px;width:24px;height:24px" viewBox="0 0 24 24" fill="none" stroke="#212121" stroke-width="2.700"><path d="M4 8.300l8 7.200 8-7.200"/></svg>
<svg class="abs" style="left:1852.5px;top:17.75px;width:24px;height:28px" viewBox="0 0 24 28" fill="#212121"><circle cx="12" cy="4.800" r="2.900"/><circle cx="12" cy="13.700" r="2.900"/><circle cx="12" cy="22.600" r="2.900"/></svg>
</div>
<div class="row" style="top:938px;height:60.8px;background:#fff">
<div class="cell c0" style="left:0px;width:446px;"><span>李家商店</span></div>
<div class="cell" style="left:446px;width:445.5px;"><span>王先生</span></div>
<div class="cell lat big" style="left:891.5px;width:376.5px;font-size:23px;letter-spacing:.48px;"><span>pos@gmail.com</span></div>
<div class="cell lat big" style="left:1268px;width:378.5px;font-size:23px;letter-spacing:-.7px;"><span>13992658470</span></div>
<div class="cell" style="left:1646.5px;width:376.5px;"><span></span></div>
<svg class="abs" style="left:1793px;top:19.599999999999998px;width:24px;height:24px" viewBox="0 0 24 24" fill="none" stroke="#212121" stroke-width="2.700"><path d="M8.500 4l7.300 8-7.300 8"/></svg>
<svg class="abs" style="left:1852.5px;top:17.599999999999998px;width:24px;height:28px" viewBox="0 0 24 28" fill="#212121"><circle cx="12" cy="4.800" r="2.900"/><circle cx="12" cy="13.700" r="2.900"/><circle cx="12" cy="22.600" r="2.900"/></svg>
</div>
<div class="row" style="top:998.8px;height:60.8px;background:#fff">
<div class="cell c0" style="left:0px;width:446px;"><span>李龙轩商店</span></div>
<div class="cell" style="left:446px;width:445.5px;"><span>王先生</span></div>
<div class="cell lat big" style="left:891.5px;width:376.5px;font-size:23px;letter-spacing:.48px;"><span>pos@gmail.com</span></div>
<div class="cell lat big" style="left:1268px;width:378.5px;font-size:23px;letter-spacing:-.7px;"><span>13992658470</span></div>
<div class="cell" style="left:1646.5px;width:376.5px;"><span></span></div>
<svg class="abs" style="left:1793px;top:19.599999999999998px;width:24px;height:24px" viewBox="0 0 24 24" fill="none" stroke="#212121" stroke-width="2.700"><path d="M8.500 4l7.300 8-7.300 8"/></svg>
<svg class="abs" style="left:1852.5px;top:17.599999999999998px;width:24px;height:28px" viewBox="0 0 24 28" fill="#212121"><circle cx="12" cy="4.800" r="2.900"/><circle cx="12" cy="13.700" r="2.900"/><circle cx="12" cy="22.600" r="2.900"/></svg>
</div>
<div class="row" style="top:1059.6px;height:60.8px;background:#fff">
<div class="cell c0" style="left:0px;width:446px;"><span>欣欣便利店</span></div>
<div class="cell" style="left:446px;width:445.5px;"><span>王先生</span></div>
<div class="cell lat big" style="left:891.5px;width:376.5px;font-size:23px;letter-spacing:.48px;"><span>pos@gmail.com</span></div>
<div class="cell lat big" style="left:1268px;width:378.5px;font-size:23px;letter-spacing:-.7px;"><span>13992658470</span></div>
<div class="cell" style="left:1646.5px;width:376.5px;"><span></span></div>
<svg class="abs" style="left:1793px;top:19.599999999999998px;width:24px;height:24px" viewBox="0 0 24 24" fill="none" stroke="#212121" stroke-width="2.700"><path d="M8.500 4l7.300 8-7.300 8"/></svg>
<svg class="abs" style="left:1852.5px;top:17.599999999999998px;width:24px;height:28px" viewBox="0 0 24 28" fill="#212121"><circle cx="12" cy="4.800" r="2.900"/><circle cx="12" cy="13.700" r="2.900"/><circle cx="12" cy="22.600" r="2.900"/></svg>
</div>
  <div id="exp">
   <div id="ititle">销售订单</div>
   <div class="hr" style="left:66px;top:101px;width:1891px"></div>
   <div id="itbl">
<div class="ithead" style="top:0;height:82.5px">
<div class="th" style="left:0px;width:160px"><span>创建日期</span></div>
<div class="th" style="left:160px;width:223px"><span>订单号</span></div>
<div class="th" style="left:383px;width:222.5px"><span>总折扣</span></div>
<div class="th" style="left:605.5px;width:138.0px"><span>总税额</span></div>
<div class="th" style="left:743.5px;width:138.5px"><span>总金额</span></div>
<div class="th" style="left:882px;width:222px"><span>支付状态</span></div>
</div>
<div class="row" style="top:82.5px;height:59.5px;background:#fff">
<div class="cell lat" style="left:0px;width:160px;font-size:22px;letter-spacing:0.28px"><span>2023/4/15</span></div>
<div class="cell lat" style="left:160px;width:223px;font-size:22px;letter-spacing:-0.08px"><span>SO#000015</span></div>
<div class="cell lat" style="left:383px;width:222.5px;font-size:22px;letter-spacing:-0.38px"><span>¥0.00</span></div>
<div class="cell lat" style="left:605.5px;width:138.0px;font-size:22px;letter-spacing:-0.38px"><span>¥0.00</span></div>
<div class="cell lat" style="left:743.5px;width:138.5px;font-size:22px;letter-spacing:-1.2px"><span>¥10.00</span></div>
<div class="cell lat" style="left:882px;width:222px;font-size:22px;letter-spacing:0px"><span></span></div>
<div class="badge" style="left:949px;top:14px">待支付</div>
</div>
<div class="row" style="top:142px;height:59.5px;background:#fff">
<div class="cell lat" style="left:0px;width:160px;font-size:22px;letter-spacing:0.28px"><span>2023/4/15</span></div>
<div class="cell lat" style="left:160px;width:223px;font-size:22px;letter-spacing:-0.08px"><span>SO#000014</span></div>
<div class="cell lat" style="left:383px;width:222.5px;font-size:22px;letter-spacing:-0.38px"><span>¥0.00</span></div>
<div class="cell lat" style="left:605.5px;width:138.0px;font-size:22px;letter-spacing:-0.38px"><span>¥0.00</span></div>
<div class="cell lat" style="left:743.5px;width:138.5px;font-size:22px;letter-spacing:-1.2px"><span>¥10.00</span></div>
<div class="cell lat" style="left:882px;width:222px;font-size:22px;letter-spacing:0px"><span></span></div>
<div class="badge" style="left:949px;top:14px">待支付</div>
</div>
<div class="row" style="top:201.5px;height:59.5px;background:#fff">
<div class="cell lat" style="left:0px;width:160px;font-size:22px;letter-spacing:0.28px"><span>2023/4/15</span></div>
<div class="cell lat" style="left:160px;width:223px;font-size:22px;letter-spacing:-0.08px"><span>SO#000011</span></div>
<div class="cell lat" style="left:383px;width:222.5px;font-size:22px;letter-spacing:-0.38px"><span>¥0.00</span></div>
<div class="cell lat" style="left:605.5px;width:138.0px;font-size:22px;letter-spacing:-0.38px"><span>¥0.00</span></div>
<div class="cell lat" style="left:743.5px;width:138.5px;font-size:22px;letter-spacing:-1.2px"><span>¥10.00</span></div>
<div class="cell lat" style="left:882px;width:222px;font-size:22px;letter-spacing:0px"><span></span></div>
<div class="badge" style="left:949px;top:14px">待支付</div>
</div>
    <div class="pagbar" style="top:261px;width:100%;height:86px"><span class="plabel" style="left:43.5px;top:27px">每页数据条数:</span><span class="psel" style="left:185.5px;top:30px;width:83px;line-height:28.5px;letter-spacing:0px">5</span><span class="pcaret" style="left:247.5px;top:39.7px"></span><span class="pinfo" style="left:321.5px;top:27px;letter-spacing:0.65px">1 - 3 条/总共 3条</span><svg class="abs" style="left:540.5px;top:31px;width:28px;height:28px" viewBox="0 0 28 28" fill="none" stroke="#c2c2c2" stroke-width="3.200"><path d="M18.500 4.500l-9.500 10 9.500 10"/></svg><svg class="abs" style="left:600px;top:31px;width:28px;height:28px" viewBox="0 0 28 28" fill="none" stroke="#c2c2c2" stroke-width="3.200"><path d="M9.500 4.500l9.500 10-9.500 10"/></svg></div>
   </div>
  </div>
  <div class="pagbar" style="top:1084px;width:100%;height:86px"><span class="plabel" style="left:30.5px;top:28px">每页数据条数:</span><span class="psel" style="left:173px;top:30px;width:83.5px;line-height:27.5px;letter-spacing:-1px">20</span><span class="pcaret" style="left:234.0px;top:40.7px"></span><span class="pinfo" style="left:309px;top:28px;letter-spacing:0.24px">1 - 15 条/总共 15条</span><svg class="abs" style="left:545.5px;top:32px;width:28px;height:28px" viewBox="0 0 28 28" fill="none" stroke="#c2c2c2" stroke-width="3.200"><path d="M18.500 4.500l-9.500 10 9.500 10"/></svg><svg class="abs" style="left:604.8px;top:32px;width:28px;height:28px" viewBox="0 0 28 28" fill="none" stroke="#c2c2c2" stroke-width="3.200"><path d="M9.500 4.500l9.500 10-9.500 10"/></svg></div>
 </div>
</div>
<div id="vtrack"></div>
<div id="vthumb"></div>
<div id="menu">
 <svg class="abs" style="left:24px;top:32px;width:34px;height:34px" viewBox="0 0 24 24" fill="#5a47e0"><path d="M3 17.250V21h3.750L17.810 9.940l-3.750-3.750L3 17.250zM20.710 7.040a1 1 0 0 0 0-1.410l-2.340-2.340a1 1 0 0 0-1.410 0l-1.830 1.830 3.750 3.750 1.830-1.830z"/></svg>
 <span style="top:31px">编辑</span>
 <svg class="abs" style="left:24px;top:103.500px;width:34px;height:34px" viewBox="0 0 24 24" fill="#5a47e0"><path d="M6 19c0 1.100.9 2 2 2h8c1.100 0 2-.9 2-2V7H6v12zM19 4h-3.500l-1-1h-5l-1 1H5v2h14V4z"/></svg>
 <span style="top:104px">删除</span>
</div>
<div id="foot">Copyright © 2014-2023 <i>陕西xx物流商贸有限公司</i> All rights reserved.</div>
<div id="ver"><b>Version</b> <span style="letter-spacing:-1.100px">1.0.0</span></div>

</body></html>
